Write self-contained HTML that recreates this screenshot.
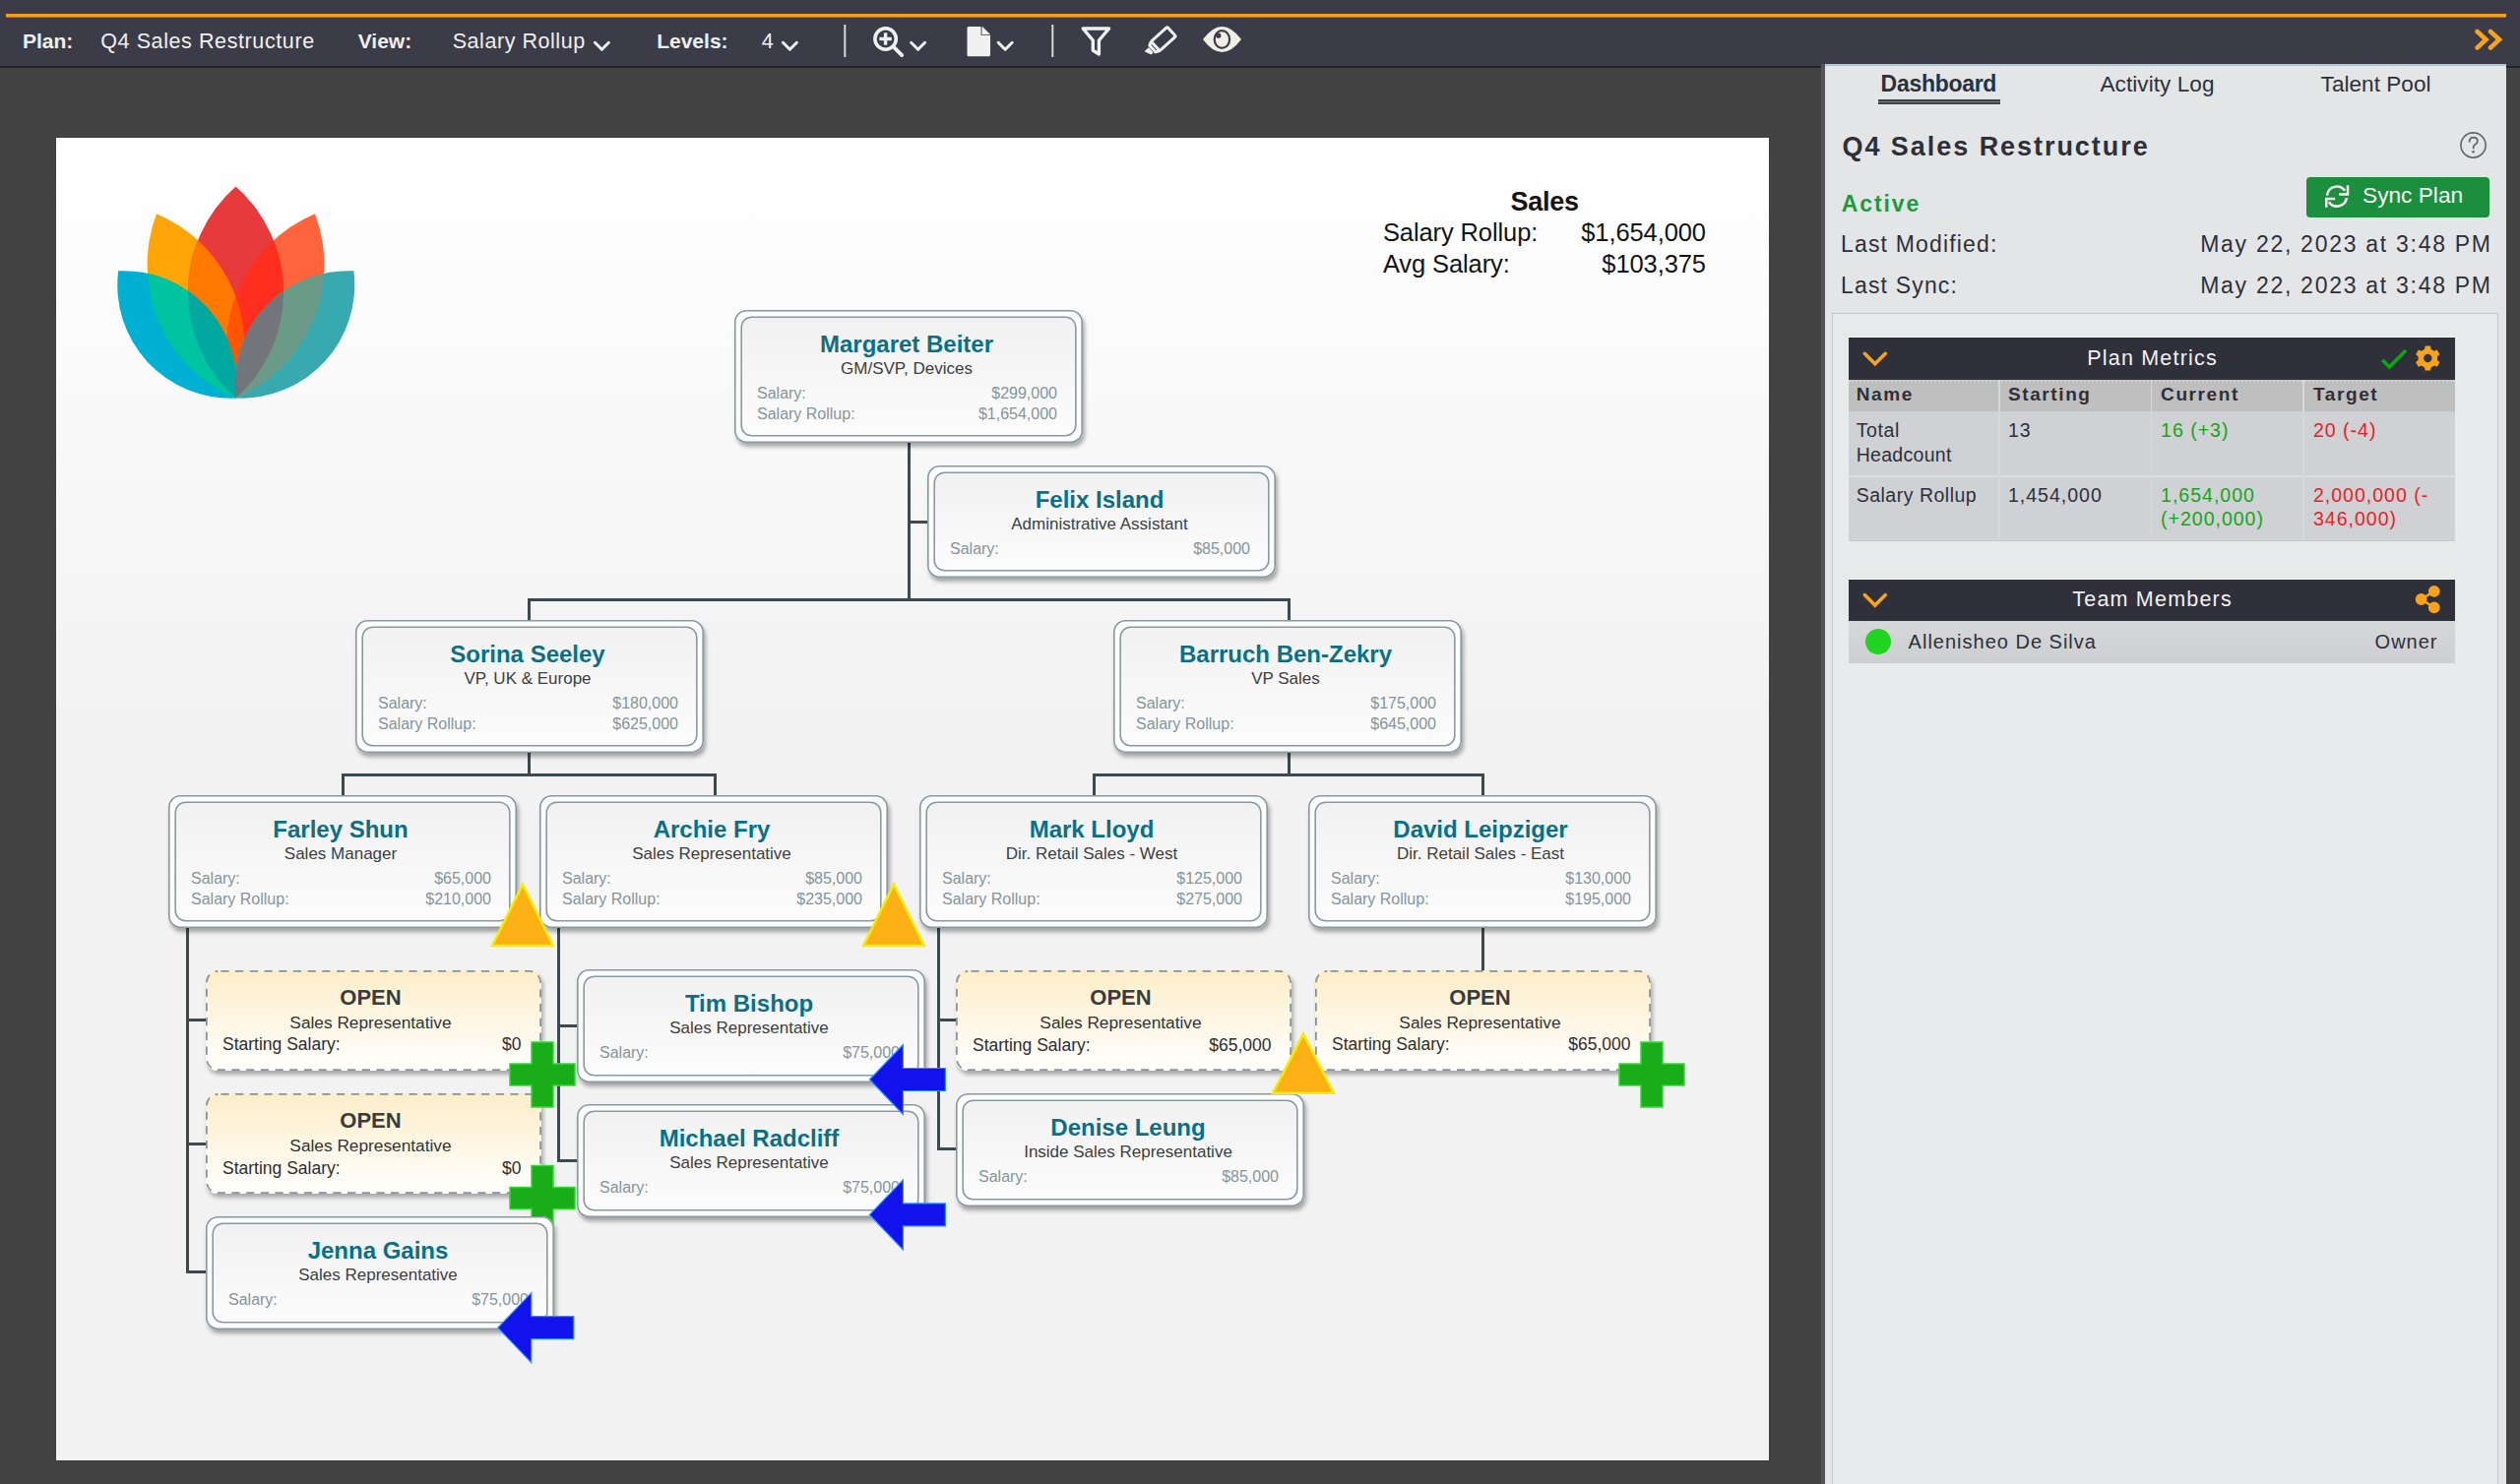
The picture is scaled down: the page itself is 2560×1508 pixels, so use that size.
<!DOCTYPE html><html><head><meta charset="utf-8"><style>
*{margin:0;padding:0;box-sizing:border-box}
html,body{width:2560px;height:1508px;overflow:hidden;background:#434343;font-family:"Liberation Sans", sans-serif}
.t{position:absolute;white-space:nowrap}
.a{position:absolute}
.card{position:absolute;border-radius:12px;background:#fdfdfd;box-shadow:2px 4px 4px rgba(0,0,0,0.33)}
.card .in{position:absolute;left:7px;top:7px;right:7px;bottom:7px;border-radius:11px;background:linear-gradient(#f1f1f1,#fcfcfc)}
.open{position:absolute;border-radius:12px;background:linear-gradient(#fdeec9,#fffdf8 88%);box-shadow:2px 4px 4px rgba(0,0,0,0.30)}
.ln{position:absolute;background:#3c4a50}
</style></head><body>
<div class="a" style="left:0;top:0;width:2560px;height:69px;background:#3b3c48;border-bottom:2px solid #242424"></div>
<div class="a" style="left:6px;top:14px;width:2540px;height:4px;background:linear-gradient(#f89c1c 80%,#b07a2a 80%)"></div>
<div class="a" style="left:57px;top:140px;width:1740px;height:1344px;background:linear-gradient(#ffffff 0px,#f2f2f2 590px,#f2f2f2);box-shadow:0 0 2px rgba(0,0,0,0.22)"></div>
<svg class="a" style="left:0;top:0" width="420" height="440" viewBox="0 0 420 440"><defs><clipPath id="cY"><path d="M159.0,217.2 A147.2,147.2 0 0 0 239.5,404.5 A147.2,147.2 0 0 0 159.0,217.2 Z"/></clipPath><clipPath id="cC"><path d="M320.0,217.2 A147.2,147.2 0 0 0 239.5,404.5 A147.2,147.2 0 0 0 320.0,217.2 Z"/></clipPath><clipPath id="cR"><path d="M239.5,189.5 A143.4,143.4 0 0 0 239.5,404.5 A143.4,143.4 0 0 0 239.5,189.5 Z"/></clipPath><clipPath id="cL"><path d="M120.2,275.3 A114.8,114.8 0 0 0 239.5,404.5 A114.8,114.8 0 0 0 120.2,275.3 Z"/></clipPath><clipPath id="cT"><path d="M359.4,275.3 A115.2,115.2 0 0 0 239.5,404.5 A115.2,115.2 0 0 0 359.4,275.3 Z"/></clipPath></defs><path d="M159.0,217.2 A147.2,147.2 0 0 0 239.5,404.5 A147.2,147.2 0 0 0 159.0,217.2 Z" fill="#ffa508"/><path d="M320.0,217.2 A147.2,147.2 0 0 0 239.5,404.5 A147.2,147.2 0 0 0 320.0,217.2 Z" fill="#ff643d"/><path d="M239.5,189.5 A143.4,143.4 0 0 0 239.5,404.5 A143.4,143.4 0 0 0 239.5,189.5 Z" fill="#e63a3c"/><g clip-path="url(#cY)"><path d="M239.5,189.5 A143.4,143.4 0 0 0 239.5,404.5 A143.4,143.4 0 0 0 239.5,189.5 Z" fill="#ff7800"/></g><g clip-path="url(#cC)"><path d="M239.5,189.5 A143.4,143.4 0 0 0 239.5,404.5 A143.4,143.4 0 0 0 239.5,189.5 Z" fill="#ff2e1e"/></g><g clip-path="url(#cC)"><g clip-path="url(#cY)"><path d="M239.5,189.5 A143.4,143.4 0 0 0 239.5,404.5 A143.4,143.4 0 0 0 239.5,189.5 Z" fill="#ff5500"/></g></g><path d="M120.2,275.3 A114.8,114.8 0 0 0 239.5,404.5 A114.8,114.8 0 0 0 120.2,275.3 Z" fill="#00b0d2"/><path d="M359.4,275.3 A115.2,115.2 0 0 0 239.5,404.5 A115.2,115.2 0 0 0 359.4,275.3 Z" fill="#38a9ae"/><g clip-path="url(#cY)"><path d="M120.2,275.3 A114.8,114.8 0 0 0 239.5,404.5 A114.8,114.8 0 0 0 120.2,275.3 Z" fill="#00c4a0"/></g><g clip-path="url(#cR)"><path d="M120.2,275.3 A114.8,114.8 0 0 0 239.5,404.5 A114.8,114.8 0 0 0 120.2,275.3 Z" fill="#00a8a0"/></g><g clip-path="url(#cC)"><path d="M359.4,275.3 A115.2,115.2 0 0 0 239.5,404.5 A115.2,115.2 0 0 0 359.4,275.3 Z" fill="#6c9a88"/></g><g clip-path="url(#cR)"><path d="M359.4,275.3 A115.2,115.2 0 0 0 239.5,404.5 A115.2,115.2 0 0 0 359.4,275.3 Z" fill="#72767a"/></g><g clip-path="url(#cL)"><path d="M359.4,275.3 A115.2,115.2 0 0 0 239.5,404.5 A115.2,115.2 0 0 0 359.4,275.3 Z" fill="#2a8aa0"/></g></svg>
<div class="t" style="left:1069.1px;width:1000px;text-align:center;top:192px;font-size:27px;line-height:27px;color:#141414;font-weight:bold;letter-spacing:-0.3px;">Sales</div>
<div class="t" style="left:1404.9px;top:224px;font-size:25.5px;line-height:25.5px;color:#141414;letter-spacing:-0.1px;">Salary Rollup:</div>
<div class="t" style="right:827.1px;top:224px;font-size:25.5px;line-height:25.5px;color:#141414;letter-spacing:-0.1px;">$1,654,000</div>
<div class="t" style="left:1404.9px;top:256px;font-size:25.5px;line-height:25.5px;color:#141414;letter-spacing:-0.1px;">Avg Salary:</div>
<div class="t" style="right:827.1px;top:256px;font-size:25.5px;line-height:25.5px;color:#141414;letter-spacing:-0.1px;">$103,375</div>
<div class="ln" style="left:921.5px;top:448.5px;width:3px;height:162.5px"></div>
<div class="ln" style="left:921.5px;top:529.0px;width:22.0px;height:3px"></div>
<div class="ln" style="left:536.0px;top:608.0px;width:774.5px;height:3px"></div>
<div class="ln" style="left:536.0px;top:608.0px;width:3px;height:23.5px"></div>
<div class="ln" style="left:1307.5px;top:608.0px;width:3px;height:23.5px"></div>
<div class="ln" style="left:536.0px;top:762.5px;width:3px;height:26.3px"></div>
<div class="ln" style="left:347.0px;top:785.8px;width:380.5px;height:3px"></div>
<div class="ln" style="left:347.0px;top:785.8px;width:3px;height:23.7px"></div>
<div class="ln" style="left:724.5px;top:785.8px;width:3px;height:23.7px"></div>
<div class="ln" style="left:1307.5px;top:762.5px;width:3px;height:26.3px"></div>
<div class="ln" style="left:1109.5px;top:785.8px;width:398.5px;height:3px"></div>
<div class="ln" style="left:1109.5px;top:785.8px;width:3px;height:23.7px"></div>
<div class="ln" style="left:1505.0px;top:785.8px;width:3px;height:23.7px"></div>
<div class="ln" style="left:188.8px;top:940.5px;width:3px;height:353.5px"></div>
<div class="ln" style="left:188.8px;top:1035.0px;width:21.7px;height:3px"></div>
<div class="ln" style="left:188.8px;top:1160.5px;width:21.7px;height:3px"></div>
<div class="ln" style="left:188.8px;top:1291.0px;width:21.7px;height:3px"></div>
<div class="ln" style="left:566.2px;top:940.5px;width:3px;height:240.3px"></div>
<div class="ln" style="left:566.2px;top:1040.8px;width:21.3px;height:3px"></div>
<div class="ln" style="left:566.2px;top:1177.8px;width:21.3px;height:3px"></div>
<div class="ln" style="left:951.7px;top:940.5px;width:3px;height:228.5px"></div>
<div class="ln" style="left:951.7px;top:1035.0px;width:20.8px;height:3px"></div>
<div class="ln" style="left:951.7px;top:1166.0px;width:20.8px;height:3px"></div>
<div class="ln" style="left:1505.0px;top:940.5px;width:3px;height:47.0px"></div>
<div class="card" style="left:746px;top:315px;width:354px;height:135px"><div class="in"></div></div>
<svg class="a" style="left:746px;top:315px" width="354" height="135" viewBox="0 0 354 135" fill="none" stroke="#899a9f" stroke-width="1.6"><rect x="0.8" y="0.8" width="352.4" height="133.4" rx="11.5"/><rect x="7.2" y="7.2" width="339.6" height="120.6" rx="10.5"/></svg>
<div class="t" style="left:421.0px;width:1000px;text-align:center;top:338px;font-size:24px;line-height:24px;color:#0b6f85;font-weight:bold;">Margaret Beiter</div>
<div class="t" style="left:421.0px;width:1000px;text-align:center;top:366px;font-size:17px;line-height:17px;color:#3e3e3e;">GM/SVP, Devices</div>
<div class="t" style="left:769.0px;top:392px;font-size:16px;line-height:16px;color:#85959a;">Salary:</div>
<div class="t" style="right:1486.0px;top:392px;font-size:16px;line-height:16px;color:#85959a;">$299,000</div>
<div class="t" style="left:769.0px;top:413px;font-size:16px;line-height:16px;color:#85959a;">Salary Rollup:</div>
<div class="t" style="right:1486.0px;top:413px;font-size:16px;line-height:16px;color:#85959a;">$1,654,000</div>
<div class="card" style="left:942px;top:473px;width:354px;height:114px"><div class="in"></div></div>
<svg class="a" style="left:942px;top:473px" width="354" height="114" viewBox="0 0 354 114" fill="none" stroke="#899a9f" stroke-width="1.6"><rect x="0.8" y="0.8" width="352.4" height="112.4" rx="11.5"/><rect x="7.2" y="7.2" width="339.6" height="99.6" rx="10.5"/></svg>
<div class="t" style="left:617.0px;width:1000px;text-align:center;top:496px;font-size:24px;line-height:24px;color:#0b6f85;font-weight:bold;">Felix Island</div>
<div class="t" style="left:617.0px;width:1000px;text-align:center;top:524px;font-size:17px;line-height:17px;color:#3e3e3e;">Administrative Assistant</div>
<div class="t" style="left:965.0px;top:550px;font-size:16px;line-height:16px;color:#85959a;">Salary:</div>
<div class="t" style="right:1290.0px;top:550px;font-size:16px;line-height:16px;color:#85959a;">$85,000</div>
<div class="card" style="left:361px;top:630px;width:354px;height:135px"><div class="in"></div></div>
<svg class="a" style="left:361px;top:630px" width="354" height="135" viewBox="0 0 354 135" fill="none" stroke="#899a9f" stroke-width="1.6"><rect x="0.8" y="0.8" width="352.4" height="133.4" rx="11.5"/><rect x="7.2" y="7.2" width="339.6" height="120.6" rx="10.5"/></svg>
<div class="t" style="left:36.0px;width:1000px;text-align:center;top:653px;font-size:24px;line-height:24px;color:#0b6f85;font-weight:bold;">Sorina Seeley</div>
<div class="t" style="left:36.0px;width:1000px;text-align:center;top:681px;font-size:17px;line-height:17px;color:#3e3e3e;">VP, UK &amp; Europe</div>
<div class="t" style="left:384.0px;top:707px;font-size:16px;line-height:16px;color:#85959a;">Salary:</div>
<div class="t" style="right:1871.0px;top:707px;font-size:16px;line-height:16px;color:#85959a;">$180,000</div>
<div class="t" style="left:384.0px;top:728px;font-size:16px;line-height:16px;color:#85959a;">Salary Rollup:</div>
<div class="t" style="right:1871.0px;top:728px;font-size:16px;line-height:16px;color:#85959a;">$625,000</div>
<div class="card" style="left:1131px;top:630px;width:354px;height:135px"><div class="in"></div></div>
<svg class="a" style="left:1131px;top:630px" width="354" height="135" viewBox="0 0 354 135" fill="none" stroke="#899a9f" stroke-width="1.6"><rect x="0.8" y="0.8" width="352.4" height="133.4" rx="11.5"/><rect x="7.2" y="7.2" width="339.6" height="120.6" rx="10.5"/></svg>
<div class="t" style="left:806.0px;width:1000px;text-align:center;top:653px;font-size:24px;line-height:24px;color:#0b6f85;font-weight:bold;">Barruch Ben-Zekry</div>
<div class="t" style="left:806.0px;width:1000px;text-align:center;top:681px;font-size:17px;line-height:17px;color:#3e3e3e;">VP Sales</div>
<div class="t" style="left:1154.0px;top:707px;font-size:16px;line-height:16px;color:#85959a;">Salary:</div>
<div class="t" style="right:1101.0px;top:707px;font-size:16px;line-height:16px;color:#85959a;">$175,000</div>
<div class="t" style="left:1154.0px;top:728px;font-size:16px;line-height:16px;color:#85959a;">Salary Rollup:</div>
<div class="t" style="right:1101.0px;top:728px;font-size:16px;line-height:16px;color:#85959a;">$645,000</div>
<div class="card" style="left:171px;top:808px;width:354px;height:135px"><div class="in"></div></div>
<svg class="a" style="left:171px;top:808px" width="354" height="135" viewBox="0 0 354 135" fill="none" stroke="#899a9f" stroke-width="1.6"><rect x="0.8" y="0.8" width="352.4" height="133.4" rx="11.5"/><rect x="7.2" y="7.2" width="339.6" height="120.6" rx="10.5"/></svg>
<div class="t" style="left:-154.0px;width:1000px;text-align:center;top:831px;font-size:24px;line-height:24px;color:#0b6f85;font-weight:bold;">Farley Shun</div>
<div class="t" style="left:-154.0px;width:1000px;text-align:center;top:859px;font-size:17px;line-height:17px;color:#3e3e3e;">Sales Manager</div>
<div class="t" style="left:194.0px;top:885px;font-size:16px;line-height:16px;color:#85959a;">Salary:</div>
<div class="t" style="right:2061.0px;top:885px;font-size:16px;line-height:16px;color:#85959a;">$65,000</div>
<div class="t" style="left:194.0px;top:906px;font-size:16px;line-height:16px;color:#85959a;">Salary Rollup:</div>
<div class="t" style="right:2061.0px;top:906px;font-size:16px;line-height:16px;color:#85959a;">$210,000</div>
<div class="card" style="left:548px;top:808px;width:354px;height:135px"><div class="in"></div></div>
<svg class="a" style="left:548px;top:808px" width="354" height="135" viewBox="0 0 354 135" fill="none" stroke="#899a9f" stroke-width="1.6"><rect x="0.8" y="0.8" width="352.4" height="133.4" rx="11.5"/><rect x="7.2" y="7.2" width="339.6" height="120.6" rx="10.5"/></svg>
<div class="t" style="left:223.0px;width:1000px;text-align:center;top:831px;font-size:24px;line-height:24px;color:#0b6f85;font-weight:bold;">Archie Fry</div>
<div class="t" style="left:223.0px;width:1000px;text-align:center;top:859px;font-size:17px;line-height:17px;color:#3e3e3e;">Sales Representative</div>
<div class="t" style="left:571.0px;top:885px;font-size:16px;line-height:16px;color:#85959a;">Salary:</div>
<div class="t" style="right:1684.0px;top:885px;font-size:16px;line-height:16px;color:#85959a;">$85,000</div>
<div class="t" style="left:571.0px;top:906px;font-size:16px;line-height:16px;color:#85959a;">Salary Rollup:</div>
<div class="t" style="right:1684.0px;top:906px;font-size:16px;line-height:16px;color:#85959a;">$235,000</div>
<div class="card" style="left:934px;top:808px;width:354px;height:135px"><div class="in"></div></div>
<svg class="a" style="left:934px;top:808px" width="354" height="135" viewBox="0 0 354 135" fill="none" stroke="#899a9f" stroke-width="1.6"><rect x="0.8" y="0.8" width="352.4" height="133.4" rx="11.5"/><rect x="7.2" y="7.2" width="339.6" height="120.6" rx="10.5"/></svg>
<div class="t" style="left:609.0px;width:1000px;text-align:center;top:831px;font-size:24px;line-height:24px;color:#0b6f85;font-weight:bold;">Mark Lloyd</div>
<div class="t" style="left:609.0px;width:1000px;text-align:center;top:859px;font-size:17px;line-height:17px;color:#3e3e3e;">Dir. Retail Sales - West</div>
<div class="t" style="left:957.0px;top:885px;font-size:16px;line-height:16px;color:#85959a;">Salary:</div>
<div class="t" style="right:1298.0px;top:885px;font-size:16px;line-height:16px;color:#85959a;">$125,000</div>
<div class="t" style="left:957.0px;top:906px;font-size:16px;line-height:16px;color:#85959a;">Salary Rollup:</div>
<div class="t" style="right:1298.0px;top:906px;font-size:16px;line-height:16px;color:#85959a;">$275,000</div>
<div class="card" style="left:1329px;top:808px;width:354px;height:135px"><div class="in"></div></div>
<svg class="a" style="left:1329px;top:808px" width="354" height="135" viewBox="0 0 354 135" fill="none" stroke="#899a9f" stroke-width="1.6"><rect x="0.8" y="0.8" width="352.4" height="133.4" rx="11.5"/><rect x="7.2" y="7.2" width="339.6" height="120.6" rx="10.5"/></svg>
<div class="t" style="left:1004.0px;width:1000px;text-align:center;top:831px;font-size:24px;line-height:24px;color:#0b6f85;font-weight:bold;">David Leipziger</div>
<div class="t" style="left:1004.0px;width:1000px;text-align:center;top:859px;font-size:17px;line-height:17px;color:#3e3e3e;">Dir. Retail Sales - East</div>
<div class="t" style="left:1352.0px;top:885px;font-size:16px;line-height:16px;color:#85959a;">Salary:</div>
<div class="t" style="right:903.0px;top:885px;font-size:16px;line-height:16px;color:#85959a;">$130,000</div>
<div class="t" style="left:1352.0px;top:906px;font-size:16px;line-height:16px;color:#85959a;">Salary Rollup:</div>
<div class="t" style="right:903.0px;top:906px;font-size:16px;line-height:16px;color:#85959a;">$195,000</div>
<div class="card" style="left:586px;top:985px;width:354px;height:115px"><div class="in"></div></div>
<svg class="a" style="left:586px;top:985px" width="354" height="115" viewBox="0 0 354 115" fill="none" stroke="#899a9f" stroke-width="1.6"><rect x="0.8" y="0.8" width="352.4" height="113.4" rx="11.5"/><rect x="7.2" y="7.2" width="339.6" height="100.6" rx="10.5"/></svg>
<div class="t" style="left:261.0px;width:1000px;text-align:center;top:1008px;font-size:24px;line-height:24px;color:#0b6f85;font-weight:bold;">Tim Bishop</div>
<div class="t" style="left:261.0px;width:1000px;text-align:center;top:1036px;font-size:17px;line-height:17px;color:#3e3e3e;">Sales Representative</div>
<div class="t" style="left:609.0px;top:1062px;font-size:16px;line-height:16px;color:#85959a;">Salary:</div>
<div class="t" style="right:1646.0px;top:1062px;font-size:16px;line-height:16px;color:#85959a;">$75,000</div>
<div class="card" style="left:586px;top:1122px;width:354px;height:115px"><div class="in"></div></div>
<svg class="a" style="left:586px;top:1122px" width="354" height="115" viewBox="0 0 354 115" fill="none" stroke="#899a9f" stroke-width="1.6"><rect x="0.8" y="0.8" width="352.4" height="113.4" rx="11.5"/><rect x="7.2" y="7.2" width="339.6" height="100.6" rx="10.5"/></svg>
<div class="t" style="left:261.0px;width:1000px;text-align:center;top:1145px;font-size:24px;line-height:24px;color:#0b6f85;font-weight:bold;">Michael Radcliff</div>
<div class="t" style="left:261.0px;width:1000px;text-align:center;top:1173px;font-size:17px;line-height:17px;color:#3e3e3e;">Sales Representative</div>
<div class="t" style="left:609.0px;top:1199px;font-size:16px;line-height:16px;color:#85959a;">Salary:</div>
<div class="t" style="right:1646.0px;top:1199px;font-size:16px;line-height:16px;color:#85959a;">$75,000</div>
<div class="card" style="left:971px;top:1111px;width:354px;height:115px"><div class="in"></div></div>
<svg class="a" style="left:971px;top:1111px" width="354" height="115" viewBox="0 0 354 115" fill="none" stroke="#899a9f" stroke-width="1.6"><rect x="0.8" y="0.8" width="352.4" height="113.4" rx="11.5"/><rect x="7.2" y="7.2" width="339.6" height="100.6" rx="10.5"/></svg>
<div class="t" style="left:646.0px;width:1000px;text-align:center;top:1134px;font-size:24px;line-height:24px;color:#0b6f85;font-weight:bold;">Denise Leung</div>
<div class="t" style="left:646.0px;width:1000px;text-align:center;top:1162px;font-size:17px;line-height:17px;color:#3e3e3e;">Inside Sales Representative</div>
<div class="t" style="left:994.0px;top:1188px;font-size:16px;line-height:16px;color:#85959a;">Salary:</div>
<div class="t" style="right:1261.0px;top:1188px;font-size:16px;line-height:16px;color:#85959a;">$85,000</div>
<div class="open" style="left:209px;top:985.5px;width:341px;height:102px"></div>
<svg class="a" style="left:209px;top:985.5px" width="341" height="102" viewBox="0 0 341 102"><rect x="0.9" y="0.9" width="339.2" height="100.2" rx="11.5" fill="none" stroke="#889499" stroke-width="1.8" stroke-dasharray="8.2 6.5" stroke-dashoffset="-3"/></svg>
<div class="t" style="left:-123.5px;width:1000px;text-align:center;top:1003px;font-size:22px;line-height:22px;color:#3b3b3b;font-weight:bold;">OPEN</div>
<div class="t" style="left:-123.5px;width:1000px;text-align:center;top:1031px;font-size:17.3px;line-height:17.3px;color:#333;">Sales Representative</div>
<div class="t" style="left:226.0px;top:1053px;font-size:17.5px;line-height:17.5px;color:#2e2e2e;">Starting Salary:</div>
<div class="t" style="right:2030.5px;top:1053px;font-size:17.5px;line-height:17.5px;color:#2e2e2e;">$0</div>
<div class="open" style="left:209px;top:1111px;width:341px;height:102px"></div>
<svg class="a" style="left:209px;top:1111px" width="341" height="102" viewBox="0 0 341 102"><rect x="0.9" y="0.9" width="339.2" height="100.2" rx="11.5" fill="none" stroke="#889499" stroke-width="1.8" stroke-dasharray="8.2 6.5" stroke-dashoffset="-3"/></svg>
<div class="t" style="left:-123.5px;width:1000px;text-align:center;top:1128px;font-size:22px;line-height:22px;color:#3b3b3b;font-weight:bold;">OPEN</div>
<div class="t" style="left:-123.5px;width:1000px;text-align:center;top:1156px;font-size:17.3px;line-height:17.3px;color:#333;">Sales Representative</div>
<div class="t" style="left:226.0px;top:1179px;font-size:17.5px;line-height:17.5px;color:#2e2e2e;">Starting Salary:</div>
<div class="t" style="right:2030.5px;top:1179px;font-size:17.5px;line-height:17.5px;color:#2e2e2e;">$0</div>
<div class="open" style="left:971px;top:986px;width:341px;height:102px"></div>
<svg class="a" style="left:971px;top:986px" width="341" height="102" viewBox="0 0 341 102"><rect x="0.9" y="0.9" width="339.2" height="100.2" rx="11.5" fill="none" stroke="#889499" stroke-width="1.8" stroke-dasharray="8.2 6.5" stroke-dashoffset="-3"/></svg>
<div class="t" style="left:638.5px;width:1000px;text-align:center;top:1003px;font-size:22px;line-height:22px;color:#3b3b3b;font-weight:bold;">OPEN</div>
<div class="t" style="left:638.5px;width:1000px;text-align:center;top:1031px;font-size:17.3px;line-height:17.3px;color:#333;">Sales Representative</div>
<div class="t" style="left:988.0px;top:1054px;font-size:17.5px;line-height:17.5px;color:#2e2e2e;">Starting Salary:</div>
<div class="t" style="right:1268.5px;top:1054px;font-size:17.5px;line-height:17.5px;color:#2e2e2e;">$65,000</div>
<div class="open" style="left:1336px;top:985.5px;width:341px;height:102px"></div>
<svg class="a" style="left:1336px;top:985.5px" width="341" height="102" viewBox="0 0 341 102"><rect x="0.9" y="0.9" width="339.2" height="100.2" rx="11.5" fill="none" stroke="#889499" stroke-width="1.8" stroke-dasharray="8.2 6.5" stroke-dashoffset="-3"/></svg>
<div class="t" style="left:1003.5px;width:1000px;text-align:center;top:1003px;font-size:22px;line-height:22px;color:#3b3b3b;font-weight:bold;">OPEN</div>
<div class="t" style="left:1003.5px;width:1000px;text-align:center;top:1031px;font-size:17.3px;line-height:17.3px;color:#333;">Sales Representative</div>
<div class="t" style="left:1353.0px;top:1053px;font-size:17.5px;line-height:17.5px;color:#2e2e2e;">Starting Salary:</div>
<div class="t" style="right:903.5px;top:1053px;font-size:17.5px;line-height:17.5px;color:#2e2e2e;">$65,000</div>
<svg class="a" style="left:0;top:0" width="2560" height="1508" viewBox="0 0 2560 1508"><polygon points="531,895.8 498,962.2 564,962.2" fill="#f6ec0a"/><polygon points="531,901.4 502,959.7 560,959.7" fill="#fbb016"/><polygon points="908,895.8 875,962.2 941,962.2" fill="#f6ec0a"/><polygon points="908,901.4 879,959.7 937,959.7" fill="#fbb016"/><polygon points="1324,1047.8 1291,1112 1357,1112" fill="#f6ec0a"/><polygon points="1324,1053.3999999999999 1295,1109.5 1353,1109.5" fill="#fbb016"/><polygon points="540,1059 562,1059 562,1081 584,1081 584,1103 562,1103 562,1125 540,1125 540,1103 518,1103 518,1081 540,1081" fill="#19ad19" stroke="#36d836" stroke-width="1.5"/><polygon points="540,1184.5 562,1184.5 562,1206.5 584,1206.5 584,1228.5 562,1228.5 562,1250.5 540,1250.5 540,1228.5 518,1228.5 518,1206.5 540,1206.5" fill="#19ad19" stroke="#36d836" stroke-width="1.5"/><polygon points="1667,1059 1689,1059 1689,1081 1711,1081 1711,1103 1689,1103 1689,1125 1667,1125 1667,1103 1645,1103 1645,1081 1667,1081" fill="#19ad19" stroke="#36d836" stroke-width="1.5"/><polygon points="883.4,1097.0 917.4,1061.5 917.4,1085.5 960.4,1085.5 960.4,1108.5 917.4,1108.5 917.4,1132.5" fill="#1212ec" stroke="#2a90ff" stroke-width="1.2"/><polygon points="883.4,1234.4 917.4,1198.9 917.4,1222.9 960.4,1222.9 960.4,1245.9 917.4,1245.9 917.4,1269.9" fill="#1212ec" stroke="#2a90ff" stroke-width="1.2"/></svg>
<div class="card" style="left:209px;top:1236px;width:354px;height:115px"><div class="in"></div></div>
<svg class="a" style="left:209px;top:1236px" width="354" height="115" viewBox="0 0 354 115" fill="none" stroke="#899a9f" stroke-width="1.6"><rect x="0.8" y="0.8" width="352.4" height="113.4" rx="11.5"/><rect x="7.2" y="7.2" width="339.6" height="100.6" rx="10.5"/></svg>
<div class="t" style="left:-116.0px;width:1000px;text-align:center;top:1259px;font-size:24px;line-height:24px;color:#0b6f85;font-weight:bold;">Jenna Gains</div>
<div class="t" style="left:-116.0px;width:1000px;text-align:center;top:1287px;font-size:17px;line-height:17px;color:#3e3e3e;">Sales Representative</div>
<div class="t" style="left:232.0px;top:1313px;font-size:16px;line-height:16px;color:#85959a;">Salary:</div>
<div class="t" style="right:2023.0px;top:1313px;font-size:16px;line-height:16px;color:#85959a;">$75,000</div>
<svg class="a" style="left:0;top:0" width="2560" height="1508" viewBox="0 0 2560 1508"><polygon points="505.8,1349.2 539.8,1313.7 539.8,1337.7 582.8,1337.7 582.8,1360.7 539.8,1360.7 539.8,1384.7" fill="#1212ec" stroke="#2a90ff" stroke-width="1.2"/></svg>
<div class="t" style="left:22.9px;top:31px;font-size:21px;line-height:21px;color:#f0f0f0;font-weight:bold;">Plan:</div>
<div class="t" style="left:102.2px;top:32px;font-size:21.5px;line-height:21.5px;color:#f0f0f0;letter-spacing:0.6px;">Q4 Sales Restructure</div>
<div class="t" style="left:363.7px;top:31px;font-size:21px;line-height:21px;color:#f0f0f0;font-weight:bold;">View:</div>
<div class="t" style="left:459.7px;top:32px;font-size:21.5px;line-height:21.5px;color:#f0f0f0;letter-spacing:0.55px;">Salary Rollup</div>
<div class="t" style="left:667.2px;top:31px;font-size:21px;line-height:21px;color:#f0f0f0;font-weight:bold;">Levels:</div>
<div class="t" style="left:773.8px;top:32px;font-size:21.5px;line-height:21.5px;color:#f0f0f0;">4</div>
<svg class="a" style="left:0;top:0" width="2560" height="70" viewBox="0 0 2560 70" fill="none" stroke="#f0f0f0"><polyline points="604.4,43.3 611.4,50.3 618.4,43.3" stroke-width="3" stroke-linecap="round" stroke-linejoin="round"/><polyline points="795.4,43.3 802.4,50.3 809.4,43.3" stroke-width="3" stroke-linecap="round" stroke-linejoin="round"/><polyline points="925.6,43.3 932.6,50.3 939.6,43.3" stroke-width="3" stroke-linecap="round" stroke-linejoin="round"/><polyline points="1014.2,43.3 1021.2,50.3 1028.2,43.3" stroke-width="3" stroke-linecap="round" stroke-linejoin="round"/><line x1="858.3" y1="25" x2="858.3" y2="58" stroke-width="2" stroke="#d8d8d8"/><line x1="1069.3" y1="25" x2="1069.3" y2="58" stroke-width="2" stroke="#d8d8d8"/><circle cx="899.6" cy="39.5" r="10.7" stroke-width="3.6"/><line x1="893.4" y1="39.5" x2="905.8" y2="39.5" stroke-width="3.4"/><line x1="899.6" y1="33.3" x2="899.6" y2="45.7" stroke-width="3.4"/><line x1="908.5" y1="48.4" x2="916.2" y2="56.1" stroke-width="3.8" stroke-linecap="round"/><path d="M984,27 L996.5,27 L1006,36 L1006,55.7 Q1006,57.2 1004.5,57.2 L984,57.2 Q982.5,57.2 982.5,55.7 L982.5,28.5 Q982.5,27 984,27 Z" fill="#f0f0f0" stroke="none"/><path d="M997,27 L997,35.5 L1006,35.5" stroke="#6a6a6a" stroke-width="1.2"/><path d="M998,27 L1006,35 L998,35 Z" fill="#f0f0f0" stroke="none"/><path d="M1100.2,29 L1126.6,29 L1116.4,41 L1116.4,55 L1110.3,51.3 L1110.3,41 Z" stroke-width="3.4" stroke-linejoin="round"/><g transform="translate(1177.5,43.5) rotate(48)"><rect x="-6.5" y="-17" width="13" height="22" rx="1.5" stroke-width="3"/><path d="M-6.5,5 L-4.5,9 L4.5,9 L6.5,5" stroke-width="3" stroke-linejoin="round"/><path d="M-3.5,11 L3.5,11 L3.5,14 L-3.5,17 Z" fill="#f0f0f0" stroke="none"/></g><path d="M1222,40 Q1241.4,14 1261,40 Q1241.4,66 1222,40 Z" fill="#f0efe6" stroke="none"/><ellipse cx="1241.4" cy="40" rx="8.8" ry="10" fill="#3b3c48" stroke="none"/><ellipse cx="1241.4" cy="40" rx="6.6" ry="7.8" fill="#f0efe6" stroke="none"/><circle cx="1237.8" cy="36.2" r="2.6" fill="#3b3c48" stroke="none"/><polyline points="2516.5,32 2525.5,40.2 2516.5,48.5" stroke="#f8a31c" stroke-width="4.6" stroke-linecap="round" stroke-linejoin="miter"/><polyline points="2530,32 2539,40.2 2530,48.5" stroke="#f8a31c" stroke-width="4.6" stroke-linecap="round" stroke-linejoin="miter"/></svg>
<div class="a" style="left:1850px;top:65px;width:4px;height:1443px;background:#555"></div>
<div class="a" style="left:1854px;top:65px;width:692px;height:1443px;background:#e4e5e7;border-top:2px solid #aec6d2"></div>
<div class="a" style="left:1861px;top:318px;width:677px;height:1200px;border:1px solid #c6c7ca;background:#e8e9eb"></div>
<div class="t" style="left:1910.6px;top:74px;font-size:23px;line-height:23px;color:#2e3038;font-weight:bold;letter-spacing:-0.3px;">Dashboard</div>
<div class="a" style="left:1908px;top:101px;width:124px;height:5px;background:#3c4148;border-top:0;"><div class="a" style="left:0;top:2px;width:124px;height:1px;background:#7a8388"></div></div>
<div class="t" style="left:2133.5px;top:75px;font-size:22.5px;line-height:22.5px;color:#2e3038;letter-spacing:0.08px;">Activity Log</div>
<div class="t" style="left:2357.6px;top:75px;font-size:22.5px;line-height:22.5px;color:#2e3038;letter-spacing:0.06px;">Talent Pool</div>
<div class="t" style="left:1871.5px;top:136px;font-size:27px;line-height:27px;color:#2e3038;font-weight:bold;letter-spacing:1.95px;">Q4 Sales Restructure</div>
<svg class="a" style="left:2496px;top:131px" width="34" height="34" viewBox="0 0 34 34"><circle cx="16.5" cy="16.5" r="12.6" fill="none" stroke="#666" stroke-width="1.6"/><path d="M12.6,12.8 Q12.8,8.6 16.8,8.6 Q20.8,8.8 20.8,12.2 Q20.8,14.6 18.2,16 Q16.6,17 16.6,19.5" fill="none" stroke="#666" stroke-width="1.8" stroke-linecap="round"/><circle cx="16.6" cy="23.2" r="1.3" fill="#666"/></svg>
<div class="t" style="left:1870.8px;top:196px;font-size:23px;line-height:23px;color:#1e9a3e;font-weight:bold;letter-spacing:1.9px;">Active</div>
<div class="a" style="left:2343px;top:180px;width:186px;height:41px;background:#1b8f3d;border-radius:4px"></div>
<svg class="a" style="left:2350px;top:180px" width="50" height="40" viewBox="2350 180 50 40" fill="none" stroke="#f4f4f4" stroke-width="2.5"><path d="M2364.1,198.6 A9.9,9.9 0 0 1 2382.1,193.8"/><path d="M2385,188.3 L2385,197.5 L2376.2,197.5"/><path d="M2383.9,201 A9.9,9.9 0 0 1 2365.9,205.2"/><path d="M2363.3,210.8 L2363.3,202 L2372.1,202"/></svg>
<div class="t" style="left:2400.0px;top:187px;font-size:22.7px;line-height:22.7px;color:#f6f6f6;">Sync Plan</div>
<div class="t" style="left:1870.0px;top:237px;font-size:23px;line-height:23px;color:#2e3038;letter-spacing:1.17px;">Last Modified:</div>
<div class="t" style="right:28.3px;top:237px;font-size:23px;line-height:23px;color:#2e3038;letter-spacing:1.72px;">May 22, 2023 at 3:48 PM</div>
<div class="t" style="left:1870.0px;top:279px;font-size:23px;line-height:23px;color:#2e3038;letter-spacing:1.17px;">Last Sync:</div>
<div class="t" style="right:28.3px;top:279px;font-size:23px;line-height:23px;color:#2e3038;letter-spacing:1.72px;">May 22, 2023 at 3:48 PM</div>
<div class="a" style="left:1878px;top:342px;width:616px;height:1px;background:#f4f4f4"></div>
<div class="a" style="left:1878px;top:343px;width:616px;height:43px;background:#30303b"></div>
<div class="t" style="left:1686.6px;width:1000px;text-align:center;top:354px;font-size:21.5px;line-height:21.5px;color:#f2f2f2;letter-spacing:1.2px;">Plan Metrics</div>
<div class="a" style="left:1878px;top:386px;width:616px;height:32px;background:#bfbfbf;border-top:2px dotted #cfd3d6"></div>
<div class="a" style="left:1878px;top:418px;width:616px;height:131.5px;background:#d0d1d4"></div>
<div class="a" style="left:1878px;top:483px;width:616px;height:1.5px;background:#dcdde0"></div>
<div class="a" style="left:2030px;top:386px;width:1.5px;height:163.5px;background:#d6d7da"></div>
<div class="a" style="left:2184.7px;top:386px;width:1.5px;height:163.5px;background:#d6d7da"></div>
<div class="a" style="left:2339px;top:386px;width:1.5px;height:163.5px;background:#d6d7da"></div>
<div class="a" style="left:1878px;top:548.5px;width:616px;height:1.5px;background:#c8c9cc"></div>
<div class="t" style="left:1885.7px;top:391px;font-size:19px;line-height:19px;color:#2e3038;font-weight:bold;letter-spacing:1.6px;">Name</div>
<div class="t" style="left:2040.0px;top:391px;font-size:19px;line-height:19px;color:#2e3038;font-weight:bold;letter-spacing:1.6px;">Starting</div>
<div class="t" style="left:2195.1px;top:391px;font-size:19px;line-height:19px;color:#2e3038;font-weight:bold;letter-spacing:1.6px;">Current</div>
<div class="t" style="left:2350.0px;top:391px;font-size:19px;line-height:19px;color:#2e3038;font-weight:bold;letter-spacing:1.6px;">Target</div>
<div class="t" style="left:1885.7px;top:428px;font-size:19.5px;line-height:19.5px;color:#2e3038;letter-spacing:0.6px;">Total</div>
<div class="t" style="left:1885.7px;top:453px;font-size:19.5px;line-height:19.5px;color:#2e3038;letter-spacing:0.3px;">Headcount</div>
<div class="t" style="left:2040.0px;top:428px;font-size:19.5px;line-height:19.5px;color:#2e3038;letter-spacing:1px;">13</div>
<div class="t" style="left:2195.1px;top:428px;font-size:19.5px;line-height:19.5px;color:#14a614;letter-spacing:1px;">16 (+3)</div>
<div class="t" style="left:2350.0px;top:428px;font-size:19.5px;line-height:19.5px;color:#ea2026;letter-spacing:1px;">20 (-4)</div>
<div class="t" style="left:1885.7px;top:494px;font-size:19.5px;line-height:19.5px;color:#2e3038;letter-spacing:0.5px;">Salary Rollup</div>
<div class="t" style="left:2040.0px;top:494px;font-size:19.5px;line-height:19.5px;color:#2e3038;letter-spacing:1px;">1,454,000</div>
<div class="t" style="left:2195.1px;top:494px;font-size:19.5px;line-height:19.5px;color:#14a614;letter-spacing:1px;">1,654,000</div>
<div class="t" style="left:2195.1px;top:518px;font-size:19.5px;line-height:19.5px;color:#14a614;letter-spacing:1px;">(+200,000)</div>
<div class="t" style="left:2350.0px;top:494px;font-size:19.5px;line-height:19.5px;color:#ea2026;letter-spacing:1px;">2,000,000 (-</div>
<div class="t" style="left:2350.0px;top:518px;font-size:19.5px;line-height:19.5px;color:#ea2026;letter-spacing:1px;">346,000)</div>
<svg class="a" style="left:1870px;top:335px" width="630" height="60" viewBox="1870 335 630 60" fill="none"><polyline points="1894.3,359.3 1904.8,369.8 1915.3,359.3" stroke="#f8a31c" stroke-width="3.6" stroke-linecap="round"/><polyline points="2420.2,365.7 2427.3,373 2444.1,356" stroke="#05aa10" stroke-width="3.6"/></svg>
<div class="a" style="left:1878px;top:587.5px;width:616px;height:1px;background:#f4f4f4"></div>
<div class="a" style="left:1878px;top:588.5px;width:616px;height:42.5px;background:#30303b"></div>
<div class="t" style="left:1686.6px;width:1000px;text-align:center;top:599px;font-size:21.5px;line-height:21.5px;color:#f2f2f2;letter-spacing:1.2px;">Team Members</div>
<div class="a" style="left:1878px;top:631px;width:616px;height:42.5px;background:linear-gradient(#d6d7d9,#cdced1);border-top:1.5px dotted #dadcde"></div>
<div class="a" style="left:1894.8px;top:639.1px;width:25.8px;height:25.8px;border-radius:50%;background:#22d422"></div>
<div class="t" style="left:1938.6px;top:642px;font-size:20px;line-height:20px;color:#2e3038;letter-spacing:1.0px;">Allenisheo De Silva</div>
<div class="t" style="right:83.5px;top:642px;font-size:20px;line-height:20px;color:#2e3038;letter-spacing:1.0px;">Owner</div>
<svg class="a" style="left:0;top:0" width="2560" height="700" viewBox="0 0 2560 700"><path fill-rule="evenodd" fill="#f8a31c" d="M2463.08,354.74 L2463.64,351.58 L2468.96,351.58 L2469.52,354.74 L2472.79,356.63 L2475.81,355.54 L2478.47,360.14 L2476.02,362.21 L2476.02,365.99 L2478.47,368.06 L2475.81,372.66 L2472.79,371.57 L2469.52,373.46 L2468.96,376.62 L2463.64,376.62 L2463.08,373.46 L2459.81,371.57 L2456.79,372.66 L2454.13,368.06 L2456.58,365.99 L2456.58,362.21 L2454.13,360.14 L2456.79,355.54 L2459.81,356.63 Z M2470.5,364.1 A4.2,4.2 0 1 0 2462.1000000000004,364.1 A4.2,4.2 0 1 0 2470.5,364.1 Z"/><g fill="#f8a31c" stroke="#f8a31c" stroke-width="2.6"><circle cx="2472.8" cy="600.9" r="4.6"/><circle cx="2459.6" cy="609" r="4.6"/><circle cx="2472.8" cy="617.4" r="4.6"/><line x1="2472.8" y1="600.9" x2="2459.6" y2="609"/><line x1="2459.6" y1="609" x2="2472.8" y2="617.4"/></g><polyline points="1894.3,604.6 1904.8,615.1 1915.3,604.6" fill="none" stroke="#f8a31c" stroke-width="3.6" stroke-linecap="round"/></svg>
</body></html>
